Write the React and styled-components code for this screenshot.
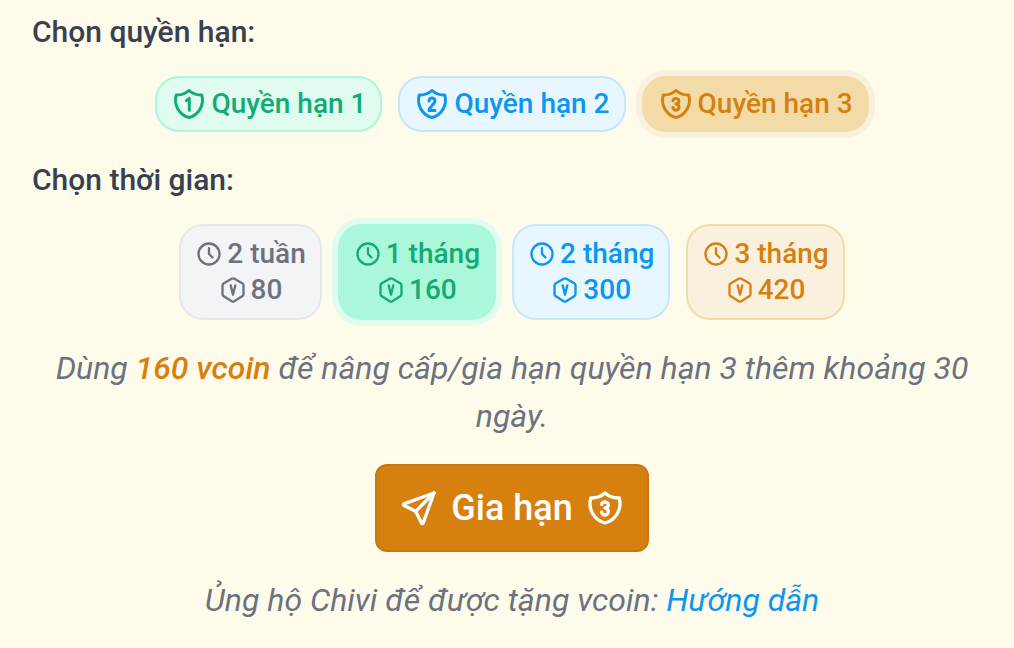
import { useState } from "react";
import styled, { createGlobalStyle } from "styled-components";
import { TbClock, TbHexagonLetterV, TbSend } from "react-icons/tb";

const GlobalStyle = createGlobalStyle`
   * {
      box-sizing: border-box;
   }
   body {
      margin: 0;
      background: #fffbeb;
      color: #374151;
      font-family: Roboto, sans-serif;
   }
`;

const tones = {
   gray: { text: "#6b7280", back: "#f3f4f6", line: "#e5e7eb" },
   green: { text: "#12ab75", back: "#dffcee", line: "#abf7da" },
   blue: { text: "#0c96ef", back: "#e8f6ff", line: "#c3e7ff" },
   orange: { text: "#d6800f", back: "#faf0de", line: "#f3dba7" },
};

const Form = styled.form`
   padding: 8px 22px 24px 32px;
`;

const Group = styled.div`
   margin-bottom: 24px;
`;

const GroupTitle = styled.h2`
   margin: 0 0 20px;
   font-size: 30px;
   font-weight: 500;
   line-height: 48px;
`;

const Choices = styled.div`
   display: flex;
   flex-wrap: wrap;
   justify-content: center;
   gap: 16px;
`;

// opciones
const Choice = styled.label`
   position: relative;
   display: flex;
   flex-direction: column;
   align-items: center;
   padding: ${(props) => (props.$tall ? "10px 14px" : "8px 14px")};
   font-size: 28px;
   font-weight: 500;
   line-height: 36px;
   cursor: pointer;
   border: 2px solid ${(props) => tones[props.$tone].line};
   border-radius: 24px;
   color: ${(props) => tones[props.$tone].text};
   background: ${(props) => tones[props.$tone].back};

   &:has(input:checked) {
      background: ${(props) => tones[props.$tone].line};
      box-shadow: 0 0 0 6px ${(props) => tones[props.$tone].back};
   }
`;

const Radio = styled.input`
   position: absolute;
   inset: 0;
   width: 100%;
   height: 100%;
   margin: 0;
   opacity: 0;
   cursor: pointer;
`;

const ChoiceLine = styled.span`
   display: flex;
   align-items: center;
   gap: 4px;
`;

const Note = styled.p`
   margin: 0 0 24px;
   color: #6b7280;
   font-size: 32px;
   font-style: italic;
   line-height: 48px;
   text-align: center;

   &:last-child {
      margin-bottom: 0;
   }
`;

const Price = styled.strong`
   color: #d6800f;
   font-weight: 500;
`;

const Link = styled.a`
   color: #0c96ef;
   text-decoration: none;

   &:hover {
      text-decoration: underline;
   }
`;

const Submit = styled.button`
   display: flex;
   align-items: center;
   gap: 12px;
   margin: 0 auto 24px;
   padding: 18px 22px;
   border: 2px solid #cb750f;
   border-radius: 12px;
   background: #d6800f;
   color: #fff;
   font-family: inherit;
   font-size: 36px;
   font-weight: 500;
   line-height: 48px;
   cursor: pointer;

   &:hover {
      background: #cb750f;
   }
`;

const marks = {
   1: "M10.3 9.8l1.9 -1.6v8",
   2: "M10 10a2 2 0 1 1 4 0c0 1.6 -4 4.4 -4 6.3h4",
   3: "M10 9.8a2 1.8 0 1 1 2 2.2a2 2.1 0 1 1 -2 2.3",
};

function Shield({ level, size }) {
   return (
      <svg
         width={size}
         height={size}
         viewBox="0 0 24 24"
         fill="none"
         stroke="currentColor"
         strokeWidth="2"
         strokeLinecap="round"
         strokeLinejoin="round"
         aria-hidden="true"
      >
         <path d="M12 3a12 12 0 0 0 8.5 3a12 12 0 0 1 -8.5 15a12 12 0 0 1 -8.5 -15a12 12 0 0 0 8.5 -3" />
         <path d={marks[level]} />
      </svg>
   );
}

const levels = [
   { level: 1, tone: "green" },
   { level: 2, tone: "blue" },
   { level: 3, tone: "orange" },
];

const periods = [
   { label: "2 tuần", days: 14, cost: 80, tone: "gray" },
   { label: "1 tháng", days: 30, cost: 160, tone: "green" },
   { label: "2 tháng", days: 60, cost: 300, tone: "blue" },
   { label: "3 tháng", days: 90, cost: 420, tone: "orange" },
];

export default function App() {
   const [level, setLevel] = useState(3);
   const [period, setPeriod] = useState(periods[1]);

   return (
      <>
         <GlobalStyle />
         <Form onSubmit={(e) => e.preventDefault()}>
            <Group role="radiogroup" aria-labelledby="level-title">
               <GroupTitle id="level-title">Chọn quyền hạn:</GroupTitle>
               <Choices>
                  {levels.map((item) => (
                     <Choice key={item.level} $tone={item.tone}>
                        <Radio
                           type="radio"
                           name="level"
                           checked={level === item.level}
                           onChange={() => setLevel(item.level)}
                        />
                        <ChoiceLine>
                           <Shield level={item.level} size={36} />
                           <span>Quyền hạn {item.level}</span>
                        </ChoiceLine>
                     </Choice>
                  ))}
               </Choices>
            </Group>

            <Group role="radiogroup" aria-labelledby="period-title">
               <GroupTitle id="period-title">Chọn thời gian:</GroupTitle>
               <Choices>
                  {periods.map((item) => (
                     <Choice key={item.label} $tone={item.tone} $tall>
                        <Radio
                           type="radio"
                           name="period"
                           checked={period === item}
                           onChange={() => setPeriod(item)}
                        />
                        <ChoiceLine>
                           <TbClock size={28} />
                           <span>{item.label}</span>
                        </ChoiceLine>
                        <ChoiceLine>
                           <TbHexagonLetterV size={28} />
                           <span>{item.cost}</span>
                        </ChoiceLine>
                     </Choice>
                  ))}
               </Choices>
            </Group>

            <Note>
               Dùng <Price>{period.cost} vcoin</Price> để nâng cấp/gia hạn quyền hạn {level} thêm
               khoảng {period.days} ngày.
            </Note>

            <Submit type="submit">
               <TbSend size={40} />
               <span>Gia hạn</span>
               <Shield level={level} size={40} />
            </Submit>

            <Note>
               Ủng hộ Chivi để được tặng vcoin: <Link href="#huong-dan">Hướng dẫn</Link>
            </Note>
         </Form>
      </>
   );
}
